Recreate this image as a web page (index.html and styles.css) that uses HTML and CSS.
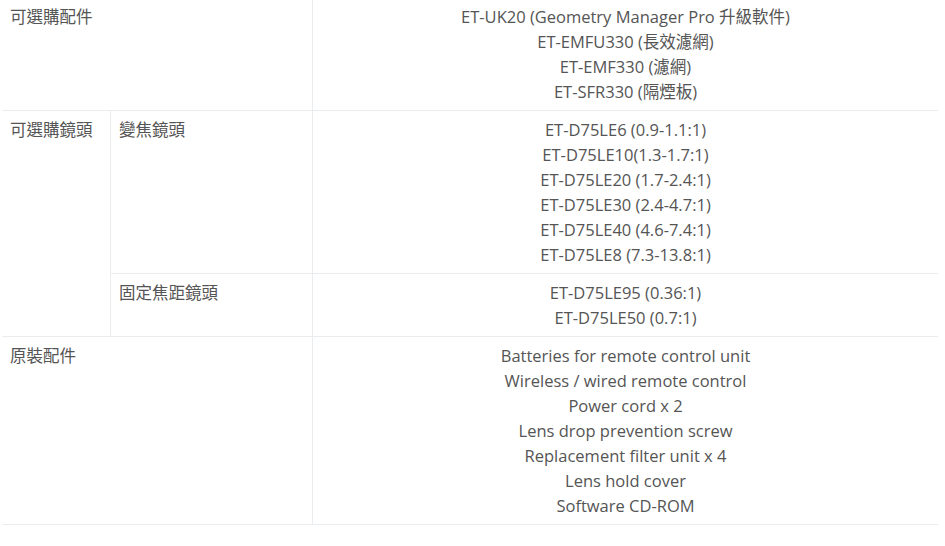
FILE: index.html
```html
<!DOCTYPE html>
<html lang="zh-Hant">
<head>
<meta charset="utf-8">
<title>Spec</title>
<link rel="stylesheet" href="styles.css">
</head>
<body>
<div class="page">
<table class="spec">
  <tr class="first">
    <th colspan="2" class="label">可選購配件</th>
    <td class="value">ET-UK20 (Geometry Manager Pro 升級軟件)<br>ET-EMFU330 (長效濾網)<br>ET-EMF330 (濾網)<br>ET-SFR330 (隔煙板)</td>
  </tr>
  <tr>
    <th rowspan="2" class="label narrow">可選購鏡頭</th>
    <th class="label sub">變焦鏡頭</th>
    <td class="value">ET-D75LE6 (0.9-1.1:1)<br>ET-D75LE10(1.3-1.7:1)<br>ET-D75LE20 (1.7-2.4:1)<br>ET-D75LE30 (2.4-4.7:1)<br>ET-D75LE40 (4.6-7.4:1)<br>ET-D75LE8 (7.3-13.8:1)</td>
  </tr>
  <tr>
    <th class="label sub">固定焦距鏡頭</th>
    <td class="value">ET-D75LE95 (0.36:1)<br>ET-D75LE50 (0.7:1)</td>
  </tr>
  <tr>
    <th colspan="2" class="label">原裝配件</th>
    <td class="value">Batteries for remote control unit<br>Wireless / wired remote control<br>Power cord x 2<br>Lens drop prevention screw<br>Replacement filter unit x 4<br>Lens hold cover<br>Software CD-ROM</td>
  </tr>
</table>
</div>
</body>
</html>
```
FILE: styles.css
```css
html, body {
  margin: 0;
  padding: 0;
  background: #fff;
}
.page {
  padding: 0 7px 0 2px;
}
.spec {
  width: 936px;
  border-collapse: collapse;
  font-family: "Open Sans", "Noto Sans CJK TC", sans-serif;
  font-size: 16.5px;
  line-height: 25px;
  color: #555;
  margin-top: -2px;
}
.spec th, .spec td {
  border-bottom: 1px solid #e9edf0;
  padding: 6px 8px 6px 8px;
  vertical-align: top;
  font-weight: normal;
}
.spec .label {
  text-align: left;
  border-right: 1px solid #e9edf0;
}
.spec .narrow {
  width: 92px;
}
.spec .sub {
  width: 185px;
}
.spec .value {
  text-align: center;
}
```
